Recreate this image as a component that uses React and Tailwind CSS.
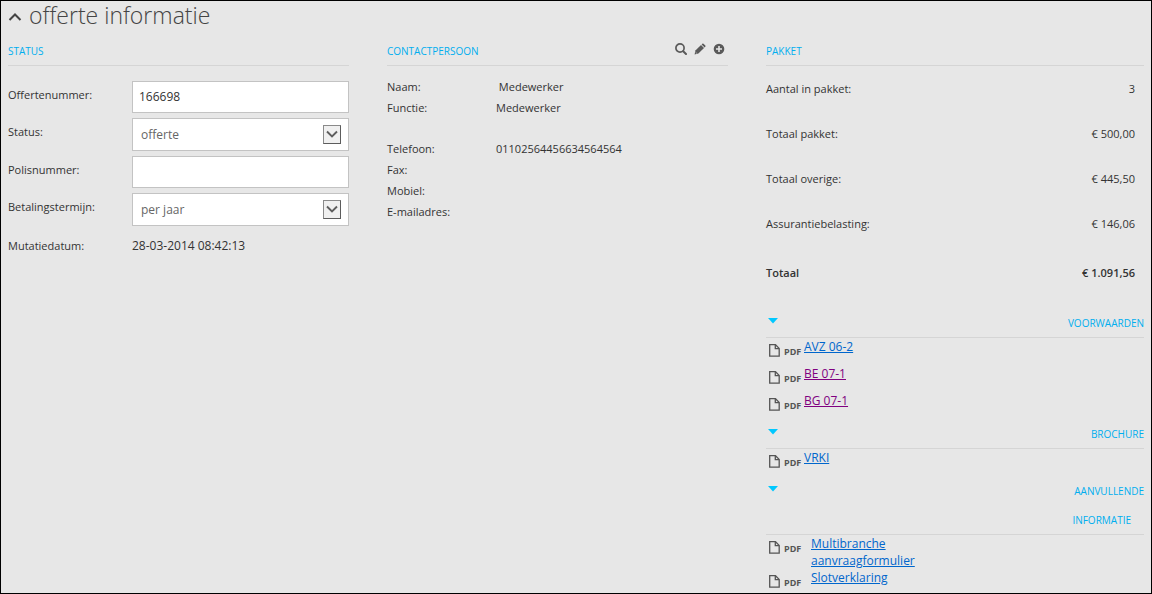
import React, { useState } from "react";

const contactRows = [
  { label: "Naam:", value: "\u00a0Medewerker" },
  { label: "Functie:", value: "Medewerker" },
];

const contactDetails = [
  { label: "Telefoon:", value: "01102564456634564564" },
  { label: "Fax:", value: "" },
  { label: "Mobiel:", value: "" },
  { label: "E-mailadres:", value: "" },
];

const packageRows = [
  { label: "Aantal in pakket:", value: "3" },
  { label: "Totaal pakket:", value: "€ 500,00" },
  { label: "Totaal overige:", value: "€ 445,50" },
  { label: "Assurantiebelasting:", value: "€ 146,06" },
];

const SearchIcon = () => (
  <svg viewBox="0 0 12 12" className="w-3 h-3" fill="none" stroke="currentColor">
    <circle cx="5" cy="5" r="4.1" strokeWidth="1.7" />
    <path d="M8.2 8.2l2.8 2.8" strokeWidth="2" strokeLinecap="round" />
  </svg>
);

const PencilIcon = () => (
  <svg viewBox="0 0 12 12" className="w-3 h-3" fill="currentColor">
    <path d="M.6 11.4l.8-3.8L7 2l3 3-5.600 5.600z" />
    <path d="M7.600 1.400l.7-.7q.6-.5 1.200 0l1.800 1.800q.5.600 0 1.200l-.7.7z" />
    <path d="M1.700 9.300l1.100 1.100" stroke="#e7e7e7" strokeWidth=".7" />
  </svg>
);

const PlusIcon = () => (
  <svg viewBox="0 0 12 12" className="w-3 h-3">
    <circle cx="6" cy="6" r="5.3" fill="currentColor" />
    <path d="M6 3v6M3 6h6" stroke="#e7e7e7" strokeWidth="1.6" />
  </svg>
);

const FileIcon = () => (
  <svg viewBox="0 0 11 13" className="w-[11px] h-[13px]" fill="none" stroke="#555" strokeWidth="1.3">
    <path d="M.7.7h5.800l3.700 3.700v7.700h-9.500z" />
    <path d="M6.300 1v3.700h3.700" />
  </svg>
);

const SectionTitle = ({ children }) => (
  <h2 className="pt-px text-[10px] leading-7 uppercase text-[#00aeef]">{children}</h2>
);

const SelectField = ({ id, options }) => (
  <div className="relative flex-1">
    <select
      id={id}
      className="block w-full h-[33px] pl-2 pr-8 appearance-none bg-white border border-[#c3c3c3] text-xs text-[#666]"
    >
      {options.map((option) => (
        <option key={option}>{option}</option>
      ))}
    </select>
    <span className="absolute right-2 top-[7px] w-[18px] h-[19px] flex items-center justify-center bg-[#f0f0f0] border border-[#8a8a8a] border-r-[#5c5c5c] border-b-[#5c5c5c] pointer-events-none">
      <svg viewBox="0 0 12 8" className="w-3 h-2 mb-0.5" fill="none" stroke="#5e5e5e" strokeWidth="1.9">
        <path d="M1 1.500l5 5 5-5" />
      </svg>
    </span>
  </div>
);

const FormRow = ({ id, label, children }) => (
  <div className="flex items-center">
    <label htmlFor={id} className="w-[124px] pb-1">
      {label}
    </label>
    {children}
  </div>
);

const InfoRow = ({ label, value }) => (
  <div className="flex leading-[21px]">
    <dt className="w-[109px]">{label}</dt>
    <dd>{value}</dd>
  </div>
);

const DocumentItem = ({ name, visited, wide }) => (
  <li className={`flex items-start pl-[3px] ${wide ? "" : "h-[27px]"}`}>
    <span className="flex items-center gap-1 pt-1 w-[35px] shrink-0">
      <FileIcon />
      <span className="text-[9px] leading-[13px] pt-[3px] font-bold text-[#555]">PDF</span>
    </span>
    <a
      href="#"
      className={`text-xs leading-[17px] underline ${wide ? "ml-[7px] w-[120px]" : ""} ${
        visited ? "text-[#800080]" : "text-[#0066cc]"
      }`}
    >
      {name}
    </a>
  </li>
);

const DocumentSection = ({ title, children }) => {
  const [open, setOpen] = useState(true);

  return (
    <section>
      <div className="flex items-start justify-between border-b border-[#d5d5d5]">
        <button
          type="button"
          aria-label="Sectie in- of uitklappen"
          aria-expanded={open}
          onClick={() => setOpen(!open)}
          className="pt-2.5 pl-0.5"
        >
          <svg viewBox="0 0 10 6" className="w-2.5 h-1.5" fill="#00c8ff">
            <path d="M0 0h10l-5 5.500z" />
          </svg>
        </button>
        <div className="text-right">{title}</div>
      </div>
      {open && <ul>{children}</ul>}
    </section>
  );
};

const App = () => {
  return (
    <main className="min-h-screen px-[7px] bg-[#e7e7e7] border border-black font-['Open_Sans',sans-serif] text-[11px] text-[#333]">
      <h1 className="flex items-center gap-[7px] h-[35px] pb-1.5 text-[23px] font-light text-[#444]">
        <svg viewBox="0 0 14 10" className="w-3.5 h-2.5 mt-0.5" fill="none" stroke="#444" strokeWidth="2">
          <path d="M1.500 8l5.500-5.500 5.500 5.500" />
        </svg>
        offerte informatie
      </h1>

      <div className="grid grid-cols-[341fr_341fr_378fr] gap-[38px]">
        <section>
          <div className="border-b border-[#d5d5d5]">
            <SectionTitle>Status</SectionTitle>
          </div>
          <form className="flex flex-col gap-[5px] pt-[15px]">
            <FormRow id="offertenummer" label="Offertenummer:">
              <input
                id="offertenummer"
                type="text"
                defaultValue="166698"
                className="flex-1 min-w-0 h-8 px-1.5 pb-0.5 bg-white border border-[#c3c3c3] text-xs"
              />
            </FormRow>
            <FormRow id="status" label="Status:">
              <SelectField id="status" options={["offerte", "polis"]} />
            </FormRow>
            <FormRow id="polisnummer" label="Polisnummer:">
              <input
                id="polisnummer"
                type="text"
                className="flex-1 min-w-0 h-8 px-1.5 pb-0.5 bg-white border border-[#c3c3c3] text-xs"
              />
            </FormRow>
            <FormRow id="betalingstermijn" label="Betalingstermijn:">
              <SelectField id="betalingstermijn" options={["per jaar", "per maand"]} />
            </FormRow>
            <div className="flex items-center h-[30px]">
              <span className="w-[124px]">Mutatiedatum:</span>
              <span className="text-xs">28-03-2014 08:42:13</span>
            </div>
          </form>
        </section>

        <section>
          <div className="flex items-start justify-between border-b border-[#d5d5d5]">
            <SectionTitle>Contactpersoon</SectionTitle>
            <div className="flex gap-[7px] pt-[7px] pr-[3px] text-[#5a5a5a]">
              <button type="button" aria-label="Zoeken">
                <SearchIcon />
              </button>
              <button type="button" aria-label="Bewerken">
                <PencilIcon />
              </button>
              <button type="button" aria-label="Toevoegen">
                <PlusIcon />
              </button>
            </div>
          </div>
          <dl className="pt-2.5">
            {contactRows.map((row) => (
              <InfoRow key={row.label} {...row} />
            ))}
          </dl>
          <dl className="pt-5">
            {contactDetails.map((row) => (
              <InfoRow key={row.label} {...row} />
            ))}
          </dl>
        </section>

        <div>
          <div className="border-b border-[#d5d5d5]">
            <SectionTitle>Pakket</SectionTitle>
          </div>
          <table className="w-full mt-px mb-[9px]">
            <tbody>
              {packageRows.map((row) => (
                <tr key={row.label} className="h-[45px]">
                  <td>{row.label}</td>
                  <td className="pr-[9px] text-right">{row.value}</td>
                </tr>
              ))}
              <tr className="h-[52px] font-semibold">
                <td>Totaal</td>
                <td className="pr-[9px] text-right">€ 1.091,56</td>
              </tr>
            </tbody>
          </table>

          <DocumentSection title={<SectionTitle>Voorwaarden</SectionTitle>}>
            <DocumentItem name="AVZ 06-2" />
            <DocumentItem name="BE 07-1" visited />
            <DocumentItem name="BG 07-1" visited />
          </DocumentSection>
          <DocumentSection title={<SectionTitle>Brochure</SectionTitle>}>
            <DocumentItem name="VRKI" />
          </DocumentSection>
          <DocumentSection
            title={
              <SectionTitle>
                Aanvullende <span className="block pt-px pr-[13px]">informatie</span>
              </SectionTitle>
            }
          >
            <DocumentItem name="Multibranche aanvraagformulier" wide />
            <DocumentItem name="Slotverklaring" wide />
          </DocumentSection>
        </div>
      </div>
    </main>
  );
};

export default App;
